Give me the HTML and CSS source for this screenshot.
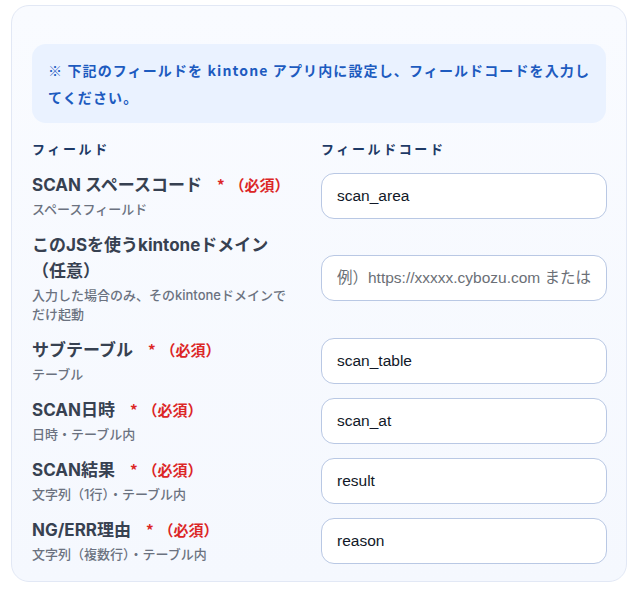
FILE: index.html
```html
<!DOCTYPE html>
<html lang="ja">
<head>
<meta charset="utf-8">
<title>フィールド設定</title>
<link rel="stylesheet" href="styles.css">
</head>
<body>
<div class="page">
  <section class="card">
    <p class="notice">※ 下記のフィールドを kintone アプリ内に設定し、フィールドコードを入力してください。</p>

    <div class="grid">
      <div class="head">フィールド</div>
      <div class="head">フィールドコード</div>

      <div class="field">
        <div class="label">SCAN スペースコード<span class="req"><span class="star">*</span>（必須）</span></div>
        <div class="sub">スペースフィールド</div>
      </div>
      <input class="code" type="text" value="scan_area">

      <div class="field">
        <div class="label">このJSを使うkintoneドメイン（任意）</div>
        <div class="sub">入力した場合のみ、そのkintoneドメインでだけ起動</div>
      </div>
      <input class="code" type="text" placeholder="例）https://xxxxx.cybozu.com または xxxxx.kintone.com">

      <div class="field">
        <div class="label">サブテーブル<span class="req"><span class="star">*</span>（必須）</span></div>
        <div class="sub">テーブル</div>
      </div>
      <input class="code" type="text" value="scan_table">

      <div class="field">
        <div class="label">SCAN日時<span class="req"><span class="star">*</span>（必須）</span></div>
        <div class="sub">日時・テーブル内</div>
      </div>
      <input class="code" type="text" value="scan_at">

      <div class="field">
        <div class="label">SCAN結果<span class="req"><span class="star">*</span>（必須）</span></div>
        <div class="sub">文字列（1行）・テーブル内</div>
      </div>
      <input class="code" type="text" value="result">

      <div class="field">
        <div class="label">NG/ERR理由<span class="req"><span class="star">*</span>（必須）</span></div>
        <div class="sub">文字列（複数行）・テーブル内</div>
      </div>
      <input class="code" type="text" value="reason">
    </div>
  </section>
</div>
</body>
</html>
```

FILE: styles.css
```css
html, body {
  margin: 0;
  padding: 0;
  background: #ffffff;
}

body {
  font-family: Inter, "Noto Sans CJK JP", sans-serif;
  color: #374151;
}

.page {
  padding: 5px 15px 0 11px;
}

.card {
  box-sizing: border-box;
  width: 616px;
  padding: 38px 20px 17px;
  border: 1px solid #e2e8f5;
  border-radius: 18px;
  background: linear-gradient(180deg, #f9fbff 0%, #f5f8fe 100%);
}

.notice {
  margin: 0;
  padding: 13px 10px 12px 16px;
  border-radius: 14px;
  background: #eaf2ff;
  color: #1d5bbf;
  font-family: "Noto Sans CJK JP", sans-serif;
  font-size: 14px;
  font-weight: 700;
  line-height: 27px;
  letter-spacing: 0.08em;
}

.grid {
  display: grid;
  grid-template-columns: 265px 286px;
  column-gap: 24px;
  row-gap: 13px;
  align-items: center;
  margin-top: 16px;
}

.head {
  font-family: "Noto Sans CJK JP", sans-serif;
  font-size: 13px;
  font-weight: 700;
  line-height: 20px;
  letter-spacing: 0.2em;
  color: #1e3a66;
}

.label {
  font-size: 17px;
  font-weight: 700;
  line-height: 26px;
  color: #374151;
}

.req {
  margin-left: 15px;
  font-family: "Noto Sans CJK JP", sans-serif;
  font-size: 15px;
  color: #dc2626;
}

.star {
  margin-right: 5px;
}

.sub {
  margin-top: 2px;
  font-size: 13px;
  font-weight: 500;
  line-height: 19px;
  color: #6b7280;
}

.code {
  box-sizing: border-box;
  width: 286px;
  height: 46px;
  padding: 0 15px;
  border: 1px solid #b9c8e4;
  border-radius: 13px;
  background: #ffffff;
  font-family: "Liberation Sans", Arial, "Noto Sans CJK JP", sans-serif;
  font-size: 15.5px;
  color: #111827;
  outline: none;
}

.code::placeholder {
  color: #6b6f76;
}
```
